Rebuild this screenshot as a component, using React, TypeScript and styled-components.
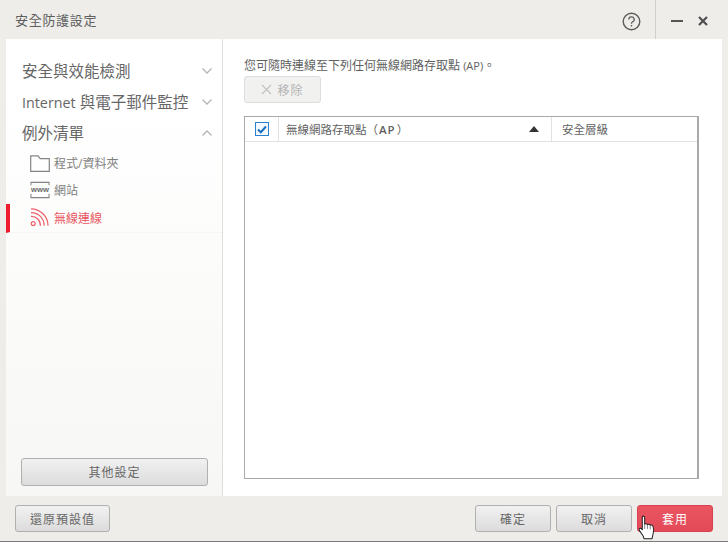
import { ReactNode } from "react";
import styled, { createGlobalStyle } from "styled-components";

const GlobalStyle = createGlobalStyle`
  html, body {
    margin: 0;
    padding: 0;
    background: #eeedea;
  }
  body {
    font-family: "Open Sans", "Noto Sans CJK TC", sans-serif;
  }
`;

const Chevron = ({ up }: { up: boolean }) => (
  <svg width="12" height="8" viewBox="0 0 12 8">
    <path
      d={up ? "M1.5 6.5 L6 2 L10.5 6.5" : "M1.5 1.5 L6 6 L10.5 1.5"}
      fill="none"
      stroke="#b4b4b4"
      strokeWidth="1.3"
    />
  </svg>
);

const FolderIcon = () => (
  <svg width="20" height="17" viewBox="0 0 20 17">
    <path
      d="M0.7 16.3 V0.8 H8 L10.2 3.7 H19.3 V16.3 Z"
      fill="none"
      stroke="#858585"
      strokeWidth="1.2"
    />
  </svg>
);

const WwwIcon = () => (
  <svg width="21" height="18" viewBox="0 0 21 18">
    <path d="M1 4 V1 H20 V4 M1 13 V17 H20 V13" fill="none" stroke="#858585" strokeWidth="1.1" />
    <text x="10.5" y="11" fontSize="8" fontWeight="700" textAnchor="middle" fill="#6a6a6a" fontFamily="Liberation Sans, sans-serif">
      www
    </text>
  </svg>
);

const WifiIcon = () => (
  <svg width="20" height="19" viewBox="0 0 20 19">
    <g fill="none" stroke="#ee5f69" strokeWidth="1.2">
      <circle cx="3.2" cy="15.6" r="2" />
      <path d="M1 8.4 A9 9 0 0 1 10.4 17.8" />
      <path d="M1 4.6 A13 13 0 0 1 14.2 17.8" />
      <path d="M1 0.8 A17 17 0 0 1 18 17.8" />
    </g>
  </svg>
);

const HelpIcon = () => (
  <svg width="19" height="19" viewBox="0 0 19 19">
    <circle cx="9.5" cy="9.5" r="8.3" fill="none" stroke="#5c5c5c" strokeWidth="1.4" />
    <path d="M6.8 7.4 A2.7 2.6 0 1 1 10.6 9.8 C9.7 10.3 9.5 10.8 9.5 11.8" fill="none" stroke="#5c5c5c" strokeWidth="1.3" />
    <rect x="8.8" y="13" width="1.4" height="1.5" fill="#5c5c5c" />
  </svg>
);

const CloseIcon = () => (
  <svg width="10" height="10" viewBox="0 0 10 10">
    <path d="M1 1 L9 9 M9 1 L1 9" stroke="#4f4f4f" strokeWidth="2.2" />
  </svg>
);

const RemoveIcon = () => (
  <svg width="11" height="11" viewBox="0 0 11 11">
    <path d="M1 1 L10 10 M10 1 L1 10" stroke="#c4c4c4" strokeWidth="1.3" />
  </svg>
);

const HandCursor = () => (
  <svg width="18" height="25" viewBox="0 0 19 27">
    <path
      d="M4.5 1.6 C5.6 0.8 7 1.4 7 2.8 V10 C7.6 9.3 9.4 9.3 10 10.4 C10.8 9.7 12.4 9.9 13 11 C13.9 10.5 15.6 10.8 16 12.2 C16.8 14.5 17 18 16 20.6 L15 25.6 H6.2 L5.4 22.6 L1.2 16.6 C0.4 15.2 1.6 13.6 3.2 14.6 L4.4 15.8 V2.8 Z"
      fill="#fff"
      stroke="#222"
      strokeWidth="1.1"
      strokeLinejoin="round"
    />
    <path d="M7 10 V15 M10 10.4 V15 M13 11 V15.4" stroke="#555" strokeWidth="0.8" fill="none" />
  </svg>
);

export default function App() {
  const navItems: { label: ReactNode; open: boolean }[] = [
    { label: "安全與效能檢測", open: false },
    {
      label: (
        <>
          <NavLatin>Internet</NavLatin> 與電子郵件監控
        </>
      ),
      open: false,
    },
    { label: "例外清單", open: true },
  ];

  return (
    <>
      <GlobalStyle />
      <Window>
        <TitleBar>
          <Title>安全防護設定</Title>
          <TitleTools>
            <HelpButton>
              <HelpIcon />
            </HelpButton>
            <Minimize />
            <CloseIcon />
          </TitleTools>
        </TitleBar>
        <Body>
          <Sidebar>
            <Nav>
              {navItems.map((item, i) => (
                <NavRow key={i}>
                  <span>{item.label}</span>
                  <Chevron up={item.open} />
                </NavRow>
              ))}
              <SubList>
                <SubRow>
                  <IconSlot>
                    <FolderIcon />
                  </IconSlot>
                  程式/資料夾
                </SubRow>
                <SubRow>
                  <IconSlot>
                    <WwwIcon />
                  </IconSlot>
                  網站
                </SubRow>
                <SubRow $active>
                  <IconSlot>
                    <WifiIcon />
                  </IconSlot>
                  無線連線
                </SubRow>
              </SubList>
            </Nav>
            <OtherButton>其他設定</OtherButton>
          </Sidebar>
          <Main>
            <Intro>
              您可隨時連線至下列任何無線網路存取點 <IntroLatin>(AP)</IntroLatin>。
            </Intro>
            <RemoveButton disabled>
              <RemoveIcon />
              移除
            </RemoveButton>
            <Table>
              <TableHead>
                <CheckCell>
                  <CheckBox>
                    <svg width="10" height="9" viewBox="0 0 10 9">
                      <path d="M1 4.5 L3.8 7.2 L9 1.5" fill="none" stroke="#1a6fc0" strokeWidth="2" />
                    </svg>
                  </CheckBox>
                </CheckCell>
                <NameCell>
                  <span>
                    無線網路存取點（<b>AP</b>）
                  </span>
                  <SortArrow />
                </NameCell>
                <LevelCell>安全層級</LevelCell>
              </TableHead>
            </Table>
          </Main>
        </Body>
        <Footer>
          <RestoreButton>還原預設值</RestoreButton>
          <FooterRight>
            <FooterButton>確定</FooterButton>
            <FooterButton>取消</FooterButton>
            <ApplyWrap>
              <ApplyButton>套用</ApplyButton>
              <CursorSpot>
                <HandCursor />
              </CursorSpot>
            </ApplyWrap>
          </FooterRight>
        </Footer>
      </Window>
    </>
  );
}

const Window = styled.div`
  width: 728px;
  height: 542px;
  display: flex;
  flex-direction: column;
  background: #eeedea;
  box-sizing: border-box;
  border-bottom: 1px solid #7a7a7a;
  overflow: hidden;
`;

const TitleBar = styled.div`
  height: 39px;
  flex: none;
  display: flex;
  align-items: center;
  justify-content: space-between;
  padding: 0 20px 0 15px;
`;

const Title = styled.div`
  font-size: 13px;
  letter-spacing: 0.7px;
  color: #5f5f5f;
`;

const TitleTools = styled.div`
  display: flex;
  align-items: center;
  height: 100%;
  margin-top: 3px;
`;

const HelpButton = styled.div`
  display: flex;
  align-items: center;
  height: 36px;
  margin-top: -6px;
  padding: 6px 14px 0 0;
  box-sizing: content-box;
  border-right: 1px solid #cfcfcc;
`;

const Minimize = styled.div`
  width: 12px;
  height: 2px;
  margin: 0 15px 0 15px;
  background: #555;
`;

const Body = styled.div`
  flex: 1;
  display: flex;
  margin: 0 6px;
  min-height: 0;
`;

const Sidebar = styled.div`
  width: 217px;
  flex: none;
  box-sizing: border-box;
  display: flex;
  flex-direction: column;
  justify-content: space-between;
  padding: 16px 0 10px;
  border-right: 1px solid #dfdfdc;
  background: linear-gradient(#ffffff 0, #ffffff 60px, #f7f7f5 100%);
`;

const Nav = styled.div`
  display: flex;
  flex-direction: column;
`;

const NavRow = styled.div`
  height: 31px;
  display: flex;
  align-items: center;
  justify-content: space-between;
  padding: 0 9px 0 16px;
  font-size: 15.5px;
  color: #666;
  white-space: nowrap;
`;

const NavLatin = styled.span`
  font-size: 14.3px;
`;

const SubList = styled.div`
  display: flex;
  flex-direction: column;
  padding-top: 1.5px;
`;

const SubRow = styled.div<{ $active?: boolean }>`
  height: ${({ $active }) => ($active ? "29px" : "27px")};
  display: flex;
  align-items: center;
  gap: 4px;
  box-sizing: border-box;
  padding-left: ${({ $active }) => ($active ? "20px" : "24px")};
  border-left: ${({ $active }) => ($active ? "4px solid #ee1c2e" : "none")};
  font-size: 12px;
  color: ${({ $active }) => ($active ? "#e85560" : "#808080")};
  border-bottom: ${({ $active }) => ($active ? "1px solid #f6f6f4" : "none")};
`;

const IconSlot = styled.span`
  width: 20px;
  display: flex;
  justify-content: center;
`;

const Button = styled.button`
  box-sizing: border-box;
  height: 27px;
  border: 1px solid #b0b0b0;
  border-radius: 3px;
  background: linear-gradient(#f1f1f1, #dcdcdc);
  color: #666;
  font-family: inherit;
  font-size: 12px;
  letter-spacing: 1px;
  padding: 0;
`;

const OtherButton = styled(Button)`
  width: 187px;
  height: 28px;
  margin-left: 15px;
`;

const Main = styled.div`
  flex: 1;
  background: #fff;
  padding: 18px 23px 17px 21px;
  display: flex;
  flex-direction: column;
  min-width: 0;
`;

const Intro = styled.div`
  font-size: 12px;
  line-height: 17px;
  color: #5f5f5f;
`;

const IntroLatin = styled.span`
  font-size: 11px;
`;

const RemoveButton = styled(Button)`
  width: 77px;
  margin-top: 2px;
  border-color: #ddd;
  background: #f1f1f0;
  color: #b4b4b4;
  display: flex;
  align-items: center;
  justify-content: center;
  gap: 5px;
`;

const Table = styled.div`
  margin-top: 13px;
  flex: 1;
  border: 1px solid #a9a9a9;
  border-right-width: 2px;
`;

const TableHead = styled.div`
  height: 24px;
  display: flex;
  border-bottom: 1px solid #e2e2e2;
  font-size: 11.5px;
  color: #5f5f5f;
`;

const CheckCell = styled.div`
  width: 33px;
  flex: none;
  display: flex;
  align-items: center;
  justify-content: center;
  border-right: 1px solid #e2e2e2;
`;

const CheckBox = styled.div`
  width: 12px;
  height: 12px;
  border: 1px solid #2a7fce;
  display: flex;
  align-items: center;
  justify-content: center;
  background: #f4f9fd;
`;

const NameCell = styled.div`
  width: 273px;
  flex: none;
  box-sizing: border-box;
  display: flex;
  align-items: center;
  justify-content: space-between;
  padding: 0 12px 0 7px;
  border-right: 1px solid #e2e2e2;
  b {
    font-weight: 600;
    padding: 0 1px;
    letter-spacing: 1px;
  }
`;

const SortArrow = styled.span`
  width: 0;
  height: 0;
  border-left: 5px solid transparent;
  border-right: 5px solid transparent;
  border-bottom: 6px solid #333;
`;

const LevelCell = styled.div`
  flex: 1;
  display: flex;
  align-items: center;
  padding-left: 10px;
`;

const Footer = styled.div`
  height: 45px;
  flex: none;
  box-sizing: border-box;
  display: flex;
  align-items: flex-start;
  justify-content: space-between;
  padding: 9px 15px 0 15px;
`;

const FooterButton = styled(Button)`
  width: 76px;
`;

const RestoreButton = styled(Button)`
  width: 95px;
`;

const FooterRight = styled.div`
  display: flex;
  gap: 5px;
`;

const ApplyWrap = styled.div`
  position: relative;
`;

const ApplyButton = styled(Button)`
  width: 76px;
  border-color: #d8414f;
  background: linear-gradient(#ea5561, #e34a57);
  color: #fff;
`;

const CursorSpot = styled.div`
  position: absolute;
  left: 1px;
  top: 10px;
`;
